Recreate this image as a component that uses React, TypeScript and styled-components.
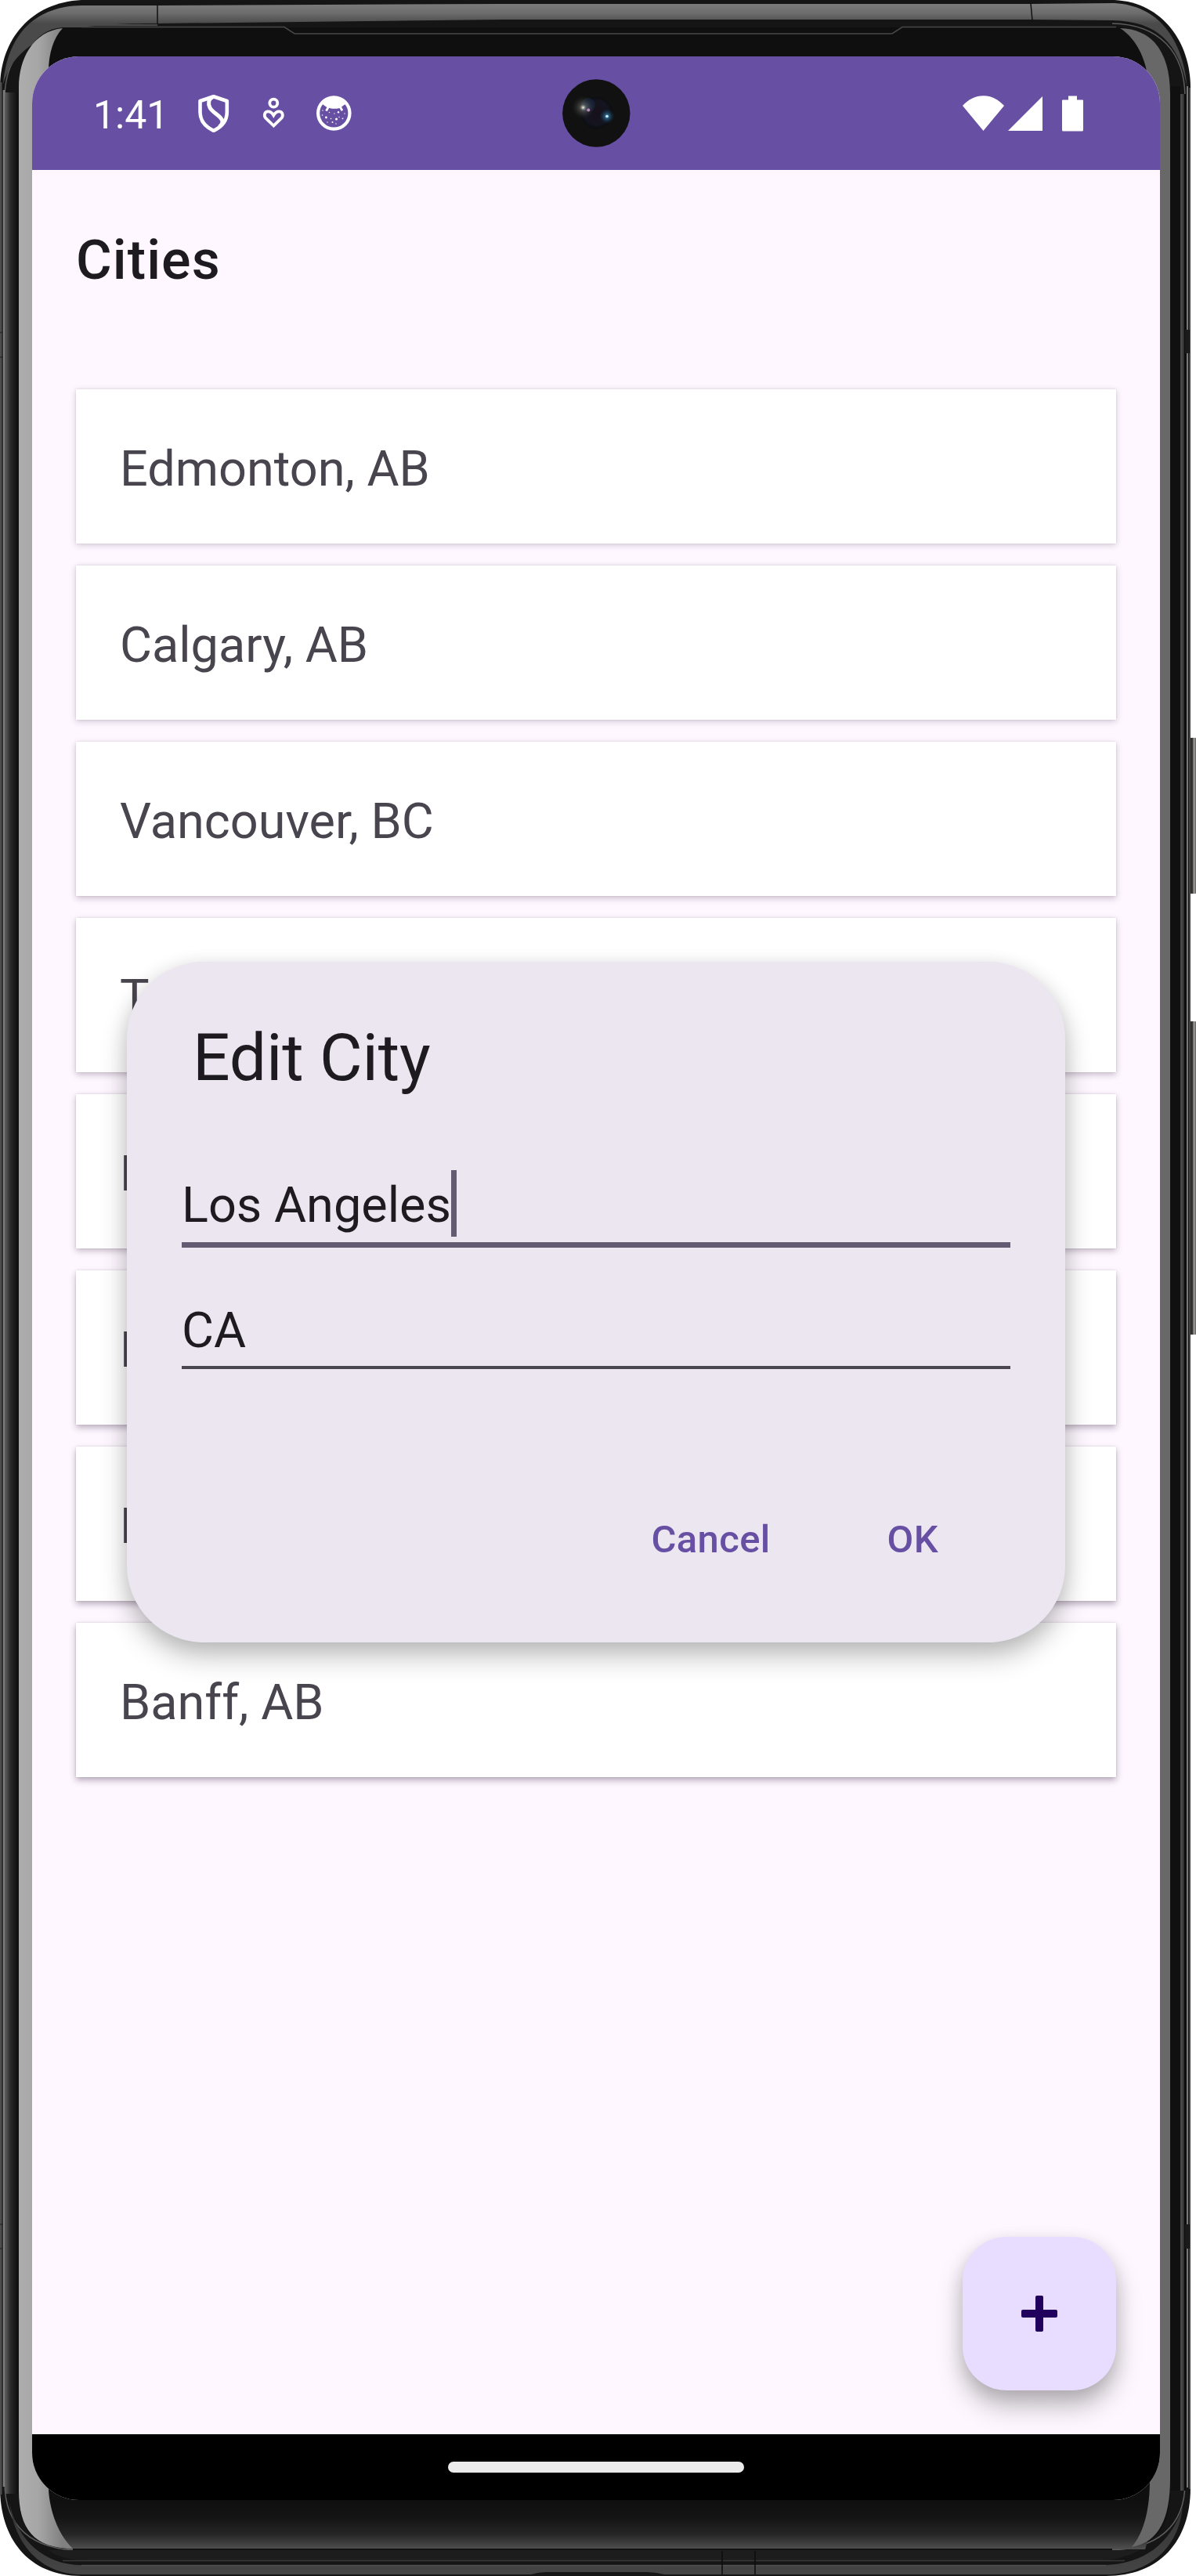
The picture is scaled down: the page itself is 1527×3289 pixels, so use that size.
import React from "react";
import styled, { createGlobalStyle } from "styled-components";

const GlobalStyle = createGlobalStyle`
  * { box-sizing: border-box; }
  body { margin: 0; background: #fff; font-family: Roboto, "Noto Sans", sans-serif; }
`;

const Device = styled.div`
  position: relative;
  width: 1527px;
  height: 3289px;
  padding: 72px 46px 97px 41px;
  overflow: hidden;
`;

const Bezel = styled.svg`
  position: absolute;
  inset: 0;
`;

const Screen = styled.div`
  position: relative;
  display: flex;
  flex-direction: column;
  height: 3120px;
  border-radius: 60px;
  overflow: hidden;
  background: #fef7ff;
`;

const StatusBar = styled.header`
  display: flex;
  align-items: center;
  justify-content: space-between;
  height: 145px;
  padding: 0 98px 0 78px;
  color: #fff;
  background: #674fa3;
`;

const StatusGroup = styled.div`
  display: flex;
  align-items: center;
`;

const Clock = styled.span`
  width: 131px;
  font-size: 50px;
  line-height: 60px;
  padding-top: 5px;
`;

const StatusIcon = styled.svg<{ $gap?: number }>`
  display: block;
  margin-right: ${(p) => p.$gap ?? 0}px;
`;

const Camera = styled.svg`
  position: absolute;
  top: 29px;
  left: 677px;
`;

const Main = styled.main`
  position: relative;
  flex: 1;
  display: flex;
  flex-direction: column;
`;

const Toolbar = styled.div`
  display: flex;
  align-items: center;
  height: 224px;
  padding: 6px 56px 0;
`;

const PageTitle = styled.h1`
  margin: 0;
  font-size: 70px;
  font-weight: 500;
  letter-spacing: 1.1px;
  color: #1d1b20;
`;

const CityList = styled.ul`
  display: flex;
  flex-direction: column;
  gap: 28px;
  margin: 0;
  padding: 56px;
  list-style: none;
`;

const CityCard = styled.li<{ $depth: number }>`
  display: flex;
  align-items: center;
  height: 197px;
  padding: 6px 56px 0;
  font-size: 63px;
  color: #49454f;
  background: #fff;
  box-shadow: 0 ${(p) => 2 + p.$depth * 0.3}px 8px rgba(40, 20, 50, ${(p) => 0.2 + p.$depth * 0.02}),
    0 0 2px rgba(40, 20, 50, 0.12);
`;

const Dialog = styled.section`
  position: absolute;
  top: 1011px;
  left: 121px;
  display: flex;
  flex-direction: column;
  width: 1198px;
  height: 869px;
  padding: 73px 70px 0;
  border-radius: 98px;
  background: #ebe6f0;
  box-shadow: 0 18px 34px rgba(0, 0, 0, 0.24), 0 4px 24px rgba(0, 0, 0, 0.09);
`;

const DialogTitle = styled.h2`
  margin: 0 0 94px;
  padding-left: 14px;
  font-size: 84px;
  font-weight: 400;
  line-height: 100px;
  letter-spacing: -0.2px;
  color: #1d1b20;
`;

const Field = styled.div<{ $focused?: boolean }>`
  display: flex;
  align-items: flex-start;
  height: ${(p) => (p.$focused ? 98 : 93)}px;
  margin-bottom: ${(p) => (p.$focused ? 62 : 0)}px;
  border-bottom: ${(p) => (p.$focused ? "7px solid #625b71" : "4px solid #4b4751")};
  font-size: 63px;
  line-height: 88px;
  color: #1d1b20;
`;

const Caret = styled.span`
  width: 7px;
  height: 85px;
  margin-top: -1px;
  background: #625b71;
`;

const Actions = styled.div`
  display: flex;
  justify-content: flex-end;
  gap: 149px;
  margin-top: 188px;
  padding-right: 92px;
`;

const TextButton = styled.button`
  padding: 0;
  border: 0;
  background: none;
  font-family: inherit;
  font-size: 49px;
  font-weight: 500;
  line-height: 60px;
  letter-spacing: 0.35px;
  color: #6750a4;
`;

const Fab = styled.button`
  position: absolute;
  right: 56px;
  bottom: 56px;
  display: flex;
  align-items: center;
  justify-content: center;
  width: 196px;
  height: 196px;
  padding: 0;
  border: 0;
  border-radius: 56px;
  background: #e9ddff;
  box-shadow: 0 20px 32px rgba(0, 0, 0, 0.26), 0 6px 22px rgba(0, 0, 0, 0.1);
`;

const NavBar = styled.footer`
  position: relative;
  display: flex;
  align-items: center;
  justify-content: center;
  height: 84px;
  background: #000;
`;

const HomePill = styled.div`
  width: 378px;
  height: 14px;
  border-radius: 7px;
  background: #ebebeb;
`;

const cities = [
  "Edmonton, AB",
  "Calgary, AB",
  "Vancouver, BC",
  "Toronto, ON",
  "Los Angeles, CA",
  "Houston, TX",
  "New York, NY",
  "Banff, AB",
];

function Frame() {
  return (
    <Bezel width="1527" height="3289" viewBox="0 0 1527 3289">
      <defs>
        <linearGradient id="topMetal" gradientUnits="userSpaceOnUse" x1="0" y1="4" x2="0" y2="30">
          <stop offset="0" stopColor="#7c7c7c" />
          <stop offset="0.5" stopColor="#6c6c6c" />
          <stop offset="1" stopColor="#4a4a4a" />
        </linearGradient>
        <linearGradient id="leftEdge">
          <stop offset="0" stopColor="#5a5a5a" />
          <stop offset="0.4" stopColor="#2a2a2a" />
          <stop offset="1" stopColor="#0e0e0e" />
        </linearGradient>
        <linearGradient id="chin" x1="0" y1="0" x2="0" y2="1">
          <stop offset="0" stopColor="#0f0f0f" />
          <stop offset="0.35" stopColor="#141414" />
          <stop offset="0.7" stopColor="#262626" />
          <stop offset="1" stopColor="#505050" />
        </linearGradient>
        <linearGradient id="lipMetal" x1="0" y1="0" x2="0" y2="1">
          <stop offset="0" stopColor="#323232" />
          <stop offset="1" stopColor="#454545" />
        </linearGradient>
        <linearGradient id="key">
          <stop offset="0" stopColor="#1b1b1b" />
          <stop offset="0.45" stopColor="#363636" />
          <stop offset="0.62" stopColor="#a09d99" />
          <stop offset="0.8" stopColor="#6c6a68" />
        </linearGradient>
        <linearGradient id="leftGlow" gradientUnits="userSpaceOnUse" x1="24" y1="0" x2="80" y2="0">
          <stop offset="0" stopColor="#adadad" />
          <stop offset="0.45" stopColor="#a6a6a6" />
          <stop offset="1" stopColor="#808080" />
        </linearGradient>
      </defs>

      {/* volume and power keys */}
      <rect x="1517" y="942" width="12" height="199" rx="4" fill="url(#key)" />
      <rect x="1517" y="1304" width="12" height="400" rx="4" fill="url(#key)" />

      {/* body */}
      <path d="M104 0H1423C1485 3 1520 55 1520 112V3176C1520 3245 1480 3289 1412 3289H104C35 3289 0 3240 0 3176V112C0 50 40 3 104 0Z" fill="#151515" />

      {/* side rails */}
      <path d="M1 105V3185" stroke="#4d4d4d" strokeWidth="3" />
      <path d="M201 32H110C45 34 6 66 6 125V3170C6 3225 40 3256 104 3256H1412C1478 3256 1513 3225 1513 3170V125C1513 66 1480 31 1420 30" fill="none" stroke="#5e5e5e" strokeWidth="1.5" />
      <rect x="7" y="118" width="16" height="3066" fill="url(#leftEdge)" />
      <path d="M5 115V3175" stroke="#7d7d7d" strokeWidth="2.5" />
      <rect x="1494" y="110" width="13" height="3070" fill="#101010" />
      <rect x="1507" y="120" width="3" height="3060" fill="#484848" />
      <rect x="1510" y="120" width="2" height="3060" fill="#333" />
      <rect x="1512" y="120" width="2" height="3060" fill="#0b0b0b" />
      <rect x="1515" y="110" width="2" height="3066" fill="#777" />
      <rect x="1518" y="112" width="2" height="3066" fill="#444" />

      {/* top metal band */}
      <path d="M4 108C10 40 48 8 104 7H201L640 5H1317L1423 4C1478 7 1510 48 1516 112C1505 55 1478 27 1420 26L1317 25H640L201 30C115 30 25 33 4 108Z" fill="url(#topMetal)" />
      <path d="M201 6V30M1316 4L1318 26" stroke="#111" strokeWidth="1.5" />

      {/* inner glass */}
      <path d="M80 35C40 38 24 80 24 115V3185C24 3240 55 3255 100 3255H1420C1475 3255 1494 3230 1494 3175V115C1494 65 1465 35 1425 35Z" fill="#0f0f0f" />
      <path d="M104 34.5H363L376 43H1139L1152 34.5H1425" fill="none" stroke="#484848" strokeWidth="1.5" />
      <path d="M41 3192H1481L1462 3255H85Z" fill="url(#chin)" />

      {/* reflections along the curved glass edge */}
      <path d="M80 36C42 40 24 75 24 112V3180C24 3228 43 3254 93 3254C70 3232 62 3195 62 3176V90C62 70 68 48 80 36Z" fill="url(#leftGlow)" />
      <path d="M1430 36C1450 36 1466 45 1474 54C1488 70 1494 92 1494 120V3165C1494 3215 1480 3246 1445 3252C1462 3232 1468 3200 1468 3167V120C1466 78 1452 50 1430 36Z" fill="#686868" />

      {/* bottom lip */}
      <path d="M93 3255H1420" stroke="#111" strokeWidth="2" />
      <path d="M62 3256H1456C1430 3268 1415 3269 1400 3269H110C90 3269 72 3264 62 3256Z" fill="#1d1d1d" />
      <path d="M80 3269.5H1436" stroke="#383838" strokeWidth="1.5" />
      <path d="M12 3195C22 3245 58 3275 104 3275H1410C1460 3274 1495 3248 1510 3200C1505 3255 1465 3287 1412 3287H104C52 3287 18 3248 12 3195Z" fill="url(#lipMetal)" />
      <path d="M104 3275.5H1412" stroke="#525252" strokeWidth="1.5" />
      <path d="M678 3287C690 3284 692 3284 706 3284H818C832 3284 834 3284 848 3287V3289H678Z" fill="#151515" />
      <path d="M922 3257V3287M964 3257V3287" stroke="#0c0c0c" strokeWidth="1.5" />

      {/* antenna seams */}
      <path d="M0 424.5H4M0 456H4M0 2840H4M0 2871H4" stroke="#2a2a2a" strokeWidth="1.5" />
      <path d="M1513 421H1519V451H1513ZM1513 2840H1519V2871H1513Z" fill="#1b1b1b" />
    </Bezel>
  );
}

function ShieldIcon() {
  return (
    <StatusIcon $gap={35} width="45" height="52" viewBox="0 0 45 52" fill="none" stroke="#fff" strokeWidth="4.6" strokeLinejoin="round">
      <path d="M22.7 4.2L39.800 10V24C39.800 36 32 43.500 22.700 47.800C13.500 43.500 5.500 36 5.500 24V10Z" />
      <path d="M21.500 5C16 7.500 15.500 13 18 18.500C21 25 34 29.500 34 36.500C34 39.500 32 41 30 43" strokeWidth="5" />
    </StatusIcon>
  );
}

function WellbeingIcon() {
  return (
    <StatusIcon $gap={34} width="40" height="52" viewBox="0 0 40 52" fill="none" stroke="#fff" strokeWidth="3.8">
      <circle cx="19.300" cy="12.700" r="5" />
      <path d="M19.300 41.500L9.600 32.200C6.500 29 7.500 24 11.700 23.400C15 23 17.500 25.200 19.300 28.300C21.100 25.200 23.600 23 26.900 23.400C31.100 24 32.100 29 29 32.200Z" />
    </StatusIcon>
  );
}

function DebugIcon() {
  return (
    <StatusIcon width="46" height="52" viewBox="0 0 46 52">
      <circle cx="22.300" cy="25.500" r="20.200" fill="none" stroke="#fff" strokeWidth="4.200" />
      <path d="M6 13.500C13 3 31 3 38 13.500C34 15 32 19 28.500 19.200C24 20 19 20 15 18.500C11 17.500 9 14 6 13.500Z" fill="#fff" />
      <path d="M15.500 17L12.500 22.700M30 17L33 22.300" stroke="#fff" strokeWidth="2.800" />
      <g fill="#fff">
        <circle cx="12.400" cy="31" r="1.400" />
        <circle cx="25.500" cy="33" r="1.500" />
        <circle cx="28" cy="24.300" r="1.200" />
        <circle cx="7.500" cy="28" r="0.800" />
        <circle cx="18.500" cy="32.500" r="0.800" />
        <circle cx="14" cy="37" r="0.700" />
        <circle cx="20.500" cy="37" r="1" />
        <circle cx="25" cy="39" r="0.700" />
        <circle cx="33.500" cy="32.300" r="0.900" />
        <circle cx="36" cy="26" r="0.700" />
        <circle cx="23" cy="26" r="0.700" />
        <circle cx="16.500" cy="24.500" r="0.700" />
        <circle cx="8" cy="22" r="0.700" />
        <circle cx="29" cy="30.500" r="0.700" />
      </g>
    </StatusIcon>
  );
}

function PunchHole() {
  return (
    <Camera width="88" height="88" viewBox="0 0 88 88">
      <defs>
        <radialGradient id="flare">
          <stop offset="0" stopColor="#f4f4e6" />
          <stop offset="0.3" stopColor="#b9bbb0" stopOpacity="0.85" />
          <stop offset="1" stopColor="#3a3c34" stopOpacity="0" />
        </radialGradient>
        <radialGradient id="blueFlare">
          <stop offset="0" stopColor="#e8fbff" />
          <stop offset="0.2" stopColor="#3b87b5" />
          <stop offset="1" stopColor="#0c2c4a" stopOpacity="0" />
        </radialGradient>
        <radialGradient id="lens">
          <stop offset="0" stopColor="#16101a" />
          <stop offset="0.75" stopColor="#14141f" />
          <stop offset="1" stopColor="#0b0d10" />
        </radialGradient>
      </defs>
      <circle cx="43.300" cy="43.500" r="43.200" fill="#101110" />
      <circle cx="43.500" cy="43" r="20.500" fill="url(#lens)" />
      <circle cx="33" cy="33" r="9" fill="#1d3a66" opacity="0.300" />
      <circle cx="26.500" cy="36" r="15" fill="url(#flare)" opacity="0.350" />
      <circle cx="26.500" cy="36.300" r="5" fill="url(#flare)" />
      <circle cx="33.300" cy="39.500" r="2" fill="#b58ab5" />
      <circle cx="57" cy="47.500" r="10" fill="url(#blueFlare)" opacity="0.700" />
      <circle cx="57" cy="47.500" r="1.800" fill="#c9f1ff" />
    </Camera>
  );
}

export default function App() {
  return (
    <>
      <GlobalStyle />
      <Device>
        <Frame />
        <Screen>
          <StatusBar>
            <StatusGroup>
              <Clock>1:41</Clock>
              <ShieldIcon />
              <WellbeingIcon />
              <DebugIcon />
            </StatusGroup>
            <StatusGroup>
              <StatusIcon $gap={5} width="53" height="46" viewBox="0 0 53 46" fill="#fff">
                <path d="M0 13C15-4 38-4 53 13L26.500 45Z" />
              </StatusIcon>
              <StatusIcon $gap={25} width="44" height="46" viewBox="0 0 44 46" fill="#fff">
                <path d="M0 45L44 1V45Z" />
              </StatusIcon>
              <StatusIcon width="27" height="46" viewBox="0 0 27 46" fill="#fff">
                <path d="M8 0.500H19V5.500H26Q27 5.500 27 6.500V44Q27 45.500 25.500 45.500H1.500Q0 45.500 0 44V6.500Q0 5.500 1 5.500H8Z" />
              </StatusIcon>
            </StatusGroup>
          </StatusBar>
          <PunchHole />
          <Main>
            <Toolbar>
              <PageTitle>Cities</PageTitle>
            </Toolbar>
            <CityList>
              {cities.map((city, i) => (
                <CityCard key={city} $depth={i}>
                  {city}
                </CityCard>
              ))}
            </CityList>
            <Dialog role="dialog" aria-label="Edit City">
              <DialogTitle>Edit City</DialogTitle>
              <Field $focused>
                Los Angeles
                <Caret />
              </Field>
              <Field>CA</Field>
              <Actions>
                <TextButton>Cancel</TextButton>
                <TextButton>OK</TextButton>
              </Actions>
            </Dialog>
            <Fab aria-label="Add city">
              <svg width="46" height="46" viewBox="0 0 46 46" fill="#21005d">
                <rect x="18" y="0" width="10" height="46" rx="2" />
                <rect x="0" y="18" width="46" height="10" rx="2" />
              </svg>
            </Fab>
          </Main>
          <NavBar>
            <HomePill />
          </NavBar>
        </Screen>
      </Device>
    </>
  );
}
